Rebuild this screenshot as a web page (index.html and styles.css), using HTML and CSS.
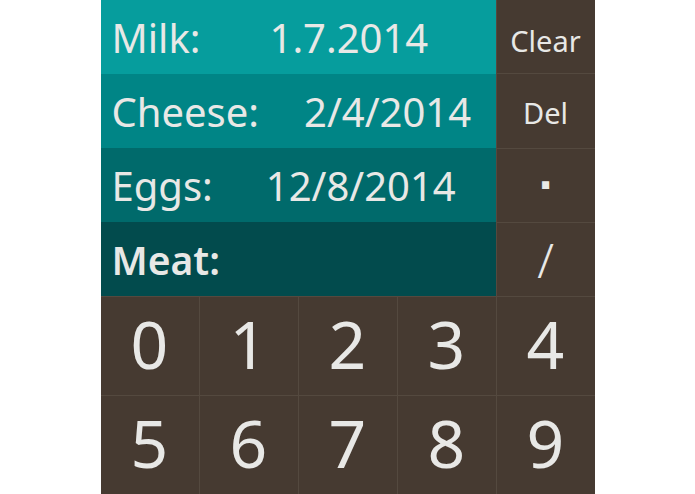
FILE: index.html
```html
<!DOCTYPE html>
<html>
<head>
<meta charset="utf-8">
<link rel="stylesheet" href="styles.css">
</head>
<body>
<div class="pad">
  <div class="entries">
    <div class="entry milk"><span class="label">Milk:</span><span class="value v-milk">1.7.2014</span></div>
    <div class="entry cheese"><span class="label">Cheese:</span><span class="value v-cheese">2/4/2014</span></div>
    <div class="entry eggs"><span class="label">Eggs:</span><span class="value v-eggs">12/8/2014</span></div>
    <div class="entry meat active"><span class="label">Meat:</span></div>
  </div>
  <div class="key side k-clear">Clear</div>
  <div class="key side k-del">Del</div>
  <div class="key side sym dot">·</div>
  <div class="key side sym slash">/</div>
  <div class="key digit">0</div>
  <div class="key digit">1</div>
  <div class="key digit">2</div>
  <div class="key digit">3</div>
  <div class="key digit">4</div>
  <div class="key digit">5</div>
  <div class="key digit">6</div>
  <div class="key digit">7</div>
  <div class="key digit">8</div>
  <div class="key digit">9</div>
</div>
</body>
</html>
```
FILE: styles.css
```css
html, body {
  margin: 0;
  padding: 0;
  background: #ffffff;
}
body {
  display: flex;
  justify-content: center;
  font-family: "Noto Sans", "Open Sans", sans-serif;
  color: #e8e8e6;
}
.pad {
  width: 494px;
  height: 494px;
  display: grid;
  grid-template-columns: repeat(5, 1fr);
  grid-template-rows: 3fr 3fr 3fr 3fr 4fr 4fr;
  gap: 1px;
  background: #54493f;
}
.entries {
  grid-column: 1 / 5;
  grid-row: 1 / 5;
  display: flex;
  flex-direction: column;
}
.entry {
  flex: 1;
  display: flex;
  align-items: center;
  padding-left: 11px;
  font-size: 40px;
}
.milk { background: #069d9d; }
.cheese { background: #008586; }
.eggs { background: #006a6b; }
.meat { background: #024b4d; }
.active .label { font-weight: 600; font-size: 39px; }
.v-milk { margin-left: 69px; }
.v-cheese { margin-left: 45px; }
.v-eggs { margin-left: 53px; }
.key {
  background: #463a31;
  display: flex;
  align-items: center;
  justify-content: center;
}
.side {
  font-size: 29px;
  padding-top: 3px;
}
.k-clear {
  padding-top: 8px;
}
.dot {
  font-family: "DejaVu Sans", sans-serif;
  font-size: 40px;
  font-weight: 700;
  padding-top: 0;
}
.slash {
  font-size: 48px;
  font-weight: 300;
  padding-top: 0;
}
.digit {
  font-size: 66px;
  padding-bottom: 6px;
}
```
